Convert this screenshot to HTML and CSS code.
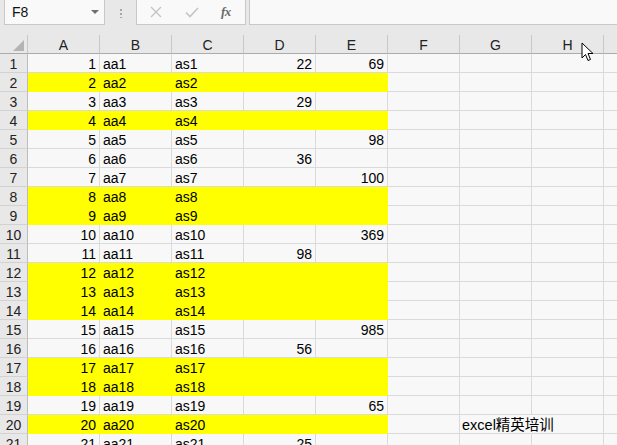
FILE: index.html
```html
<!DOCTYPE html>
<html>
<head>
<meta charset="utf-8">
<link rel="stylesheet" href="styles.css">
</head>
<body>
<div class="app">
  <div class="toolbar">
    <div class="namebox"><span class="nb-text">F8</span><span class="nb-arrow"></span></div>
    <div class="sep"><span class="dots"></span></div>
    <div class="fbtns">
      <svg class="ic" width="14" height="14" viewBox="0 0 14 14"><path d="M2 2 L12 12 M12 2 L2 12" stroke="#c4c4c4" stroke-width="1.4" fill="none"/></svg>
      <svg class="ic" width="16" height="14" viewBox="0 0 16 14"><path d="M2 7.5 L6 11.5 L14 3" stroke="#c4c4c4" stroke-width="1.6" fill="none"/></svg>
      <span class="fx">fx</span>
    </div>
    <div class="finput"></div>
  </div>
  <div class="gap"></div>
  <div class="sheet" id="sheet"></div>
  <svg class="cursor" width="14" height="21" viewBox="0 0 14 21"><path d="M1 1 L1 16 L4.5 12.5 L7 18.5 L9.5 17.5 L7 11.5 L12 11.5 Z" fill="#fff" stroke="#000" stroke-width="1" stroke-linejoin="round"/></svg>
</div>
<script src="app.js"></script>
</body>
</html>
```
FILE: app.js
```js
(function(){
  var sheet = document.getElementById('sheet');
  var cols = ['A','B','C','D','E','F','G','H',''];
  var yellow = {2:1,4:1,8:1,9:1,12:1,13:1,14:1,17:1,18:1,20:1};
  var dv = {1:22,3:29,6:36,11:98,16:56,21:25};
  var ev = {1:69,5:98,7:100,10:369,15:985,19:65};
  function el(cls, txt){ var d=document.createElement('div'); d.className=cls; if(txt!==undefined) d.textContent=txt; sheet.appendChild(d); return d; }
  el('corner').innerHTML='<span class="tri"></span>';
  cols.forEach(function(c){ el('ch', c); });
  for (var r=1;r<=21;r++){
    el('rh', String(r));
    var y = yellow[r] ? ' y' : '';
    el('c num'+y, String(r));
    el('c'+y, 'aa'+r);
    el('c'+y, 'as'+r);
    el('c num'+y, dv[r]!==undefined? String(dv[r]) : '');
    el('c num'+y, ev[r]!==undefined? String(ev[r]) : '');
    el('c', '');
    el('c'+(r===20?' over':''), r===20 ? 'excel精英培训' : '');
    el('c', '');
    el('c', '');
  }
})();
```
FILE: styles.css
```css
html, body { margin: 0; padding: 0; }
body {
  background: #e8e8e8;
  font-family: "Liberation Sans", "Noto Sans CJK SC", sans-serif;
  font-size: 14px;
  color: #000;
  overflow: hidden;
}
.app { position: relative; width: 617px; height: 445px; overflow: hidden; }
.toolbar {
  height: 26px;
  display: flex;
  align-items: flex-start;
  background: #e8e8e8;
}
.namebox {
  margin-left: 4px;
  width: 101px;
  height: 25px;
  box-sizing: border-box;
  background: #f9f9f9;
  border: 1px solid #c8c8c8;
  border-top: none;
  display: flex;
  align-items: center;
  justify-content: space-between;
  padding: 0 5px 0 7px;
  font-size: 14px;
  color: #111;
}
.nb-arrow {
  width: 0; height: 0;
  border-left: 4px solid transparent;
  border-right: 4px solid transparent;
  border-top: 4px solid #6f6f6f;
}
.sep {
  width: 31px;
  height: 25px;
  display: flex;
  align-items: center;
  justify-content: center;
}
.dots {
  width: 2px; height: 10px;
  background: radial-gradient(circle, #a8a8a8 0.9px, transparent 1.1px) 0 0 / 2px 4px repeat-y;
}
.fbtns {
  width: 110px;
  height: 25px;
  box-sizing: border-box;
  background: #f9f9f9;
  border: 1px solid #c8c8c8;
  border-top: none;
  display: flex;
  align-items: center;
  padding-left: 12px;
  gap: 21px;
}
.ic { display: block; }
.fx {
  font-family: "Liberation Serif", serif;
  font-style: italic;
  font-weight: bold;
  font-size: 13px;
  color: #6a6a6a;
  letter-spacing: -0.5px;
}
.finput {
  margin-left: 3px;
  flex: 1;
  height: 25px;
  box-sizing: border-box;
  background: #f9f9f9;
  border-left: 1px solid #c8c8c8;
  border-bottom: 1px solid #c8c8c8;
}
.gap { height: 9px; }
.sheet {
  display: grid;
  grid-template-columns: 28px repeat(9, 72px);
  grid-auto-rows: 19px;
  grid-template-rows: 19px;
  background: #f8f8f8;
}
.corner {
  background: #e8e8e8;
  border-right: 1px solid #c8c8c8;
  border-bottom: 1px solid #ababab;
  position: relative;
}
.tri {
  position: absolute;
  right: 3px; bottom: 2px;
  width: 0; height: 0;
  border-left: 11px solid transparent;
  border-bottom: 11px solid #b4b4b4;
}
.ch {
  background: #e8e8e8;
  border-right: 1px solid #c8c8c8;
  border-bottom: 1px solid #ababab;
  text-align: center;
  line-height: 20px;
  color: #222;
}
.rh {
  background: #e8e8e8;
  border-right: 1px solid #bdbdbd;
  border-bottom: 1px solid #d2d2d2;
  text-align: center;
  line-height: 20px;
  color: #222;
}
.c {
  border-right: 1px solid #dadada;
  border-bottom: 1px solid #dadada;
  padding: 0 3px 0 3px;
  line-height: 20px;
  white-space: nowrap;
  overflow: hidden;
}
.c.num { text-align: right; padding-right: 3px; }
.c.y {
  background: #ffff00;
  border-right-color: #ffff00;
  border-bottom-color: #ffff00;
}
.c.over { overflow: visible; border-right-color: transparent; padding-left: 2px; font-size: 14.5px; }
.cursor {
  position: absolute;
  left: 581px;
  top: 42px;
}
```
